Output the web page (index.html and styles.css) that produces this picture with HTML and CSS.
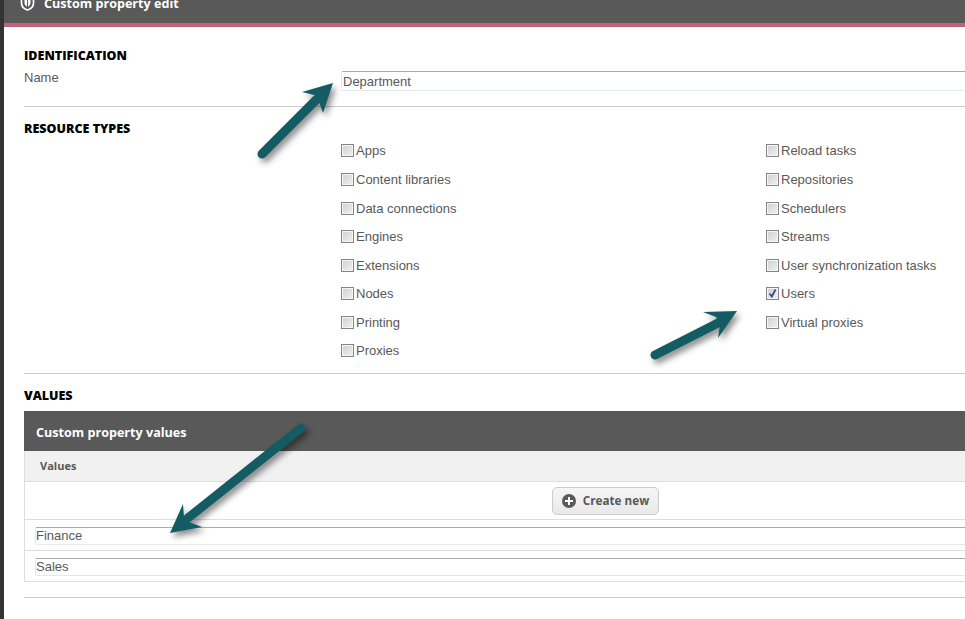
FILE: index.html
```html
<!DOCTYPE html>
<html lang="en">
<head>
<meta charset="utf-8">
<title>Custom property edit</title>
<link rel="stylesheet" href="styles.css">
</head>
<body>
<div class="strip"></div>
<main class="main">
  <header class="topbar">
    <svg class="shield" width="15" height="16" viewBox="0 0 15 16"><path d="M7.500 1 L13.500 3 V8 C13.500 11.500 10.500 14 7.500 15 C4.500 14 1.500 11.500 1.500 8 V3 Z" fill="none" stroke="#fff" stroke-width="1.700"/><path d="M4.500 5 H10.500 V8 C10.500 9.800 9 11 7.500 12 C6 11 4.500 9.800 4.500 8 Z" fill="#fff"/><path d="M7.500 4 V12" stroke="#595959" stroke-width="1"/></svg>
    <span class="topbar-title">Custom property edit</span>
  </header>

  <section class="section section-id">
    <h2 class="heading">IDENTIFICATION</h2>
    <div class="name-row">
      <label class="name-label">Name</label>
      <div class="field">Department</div>
    </div>
  </section>

  <section class="section section-types">
    <h2 class="heading">RESOURCE TYPES</h2>
    <div class="types">
      <ul class="type-list">
        <li class="type"><span class="box"></span>Apps</li>
        <li class="type"><span class="box"></span>Content libraries</li>
        <li class="type"><span class="box"></span>Data connections</li>
        <li class="type"><span class="box"></span>Engines</li>
        <li class="type"><span class="box"></span>Extensions</li>
        <li class="type"><span class="box"></span>Nodes</li>
        <li class="type"><span class="box"></span>Printing</li>
        <li class="type"><span class="box"></span>Proxies</li>
      </ul>
      <ul class="type-list">
        <li class="type"><span class="box"></span>Reload tasks</li>
        <li class="type"><span class="box"></span>Repositories</li>
        <li class="type"><span class="box"></span>Schedulers</li>
        <li class="type"><span class="box"></span>Streams</li>
        <li class="type"><span class="box"></span>User synchronization tasks</li>
        <li class="type"><span class="box"><svg class="tick" width="11" height="11" viewBox="0 0 11 11"><path d="M2.500 5.500 L4.800 8.500 L8.500 1.500" fill="none" stroke="#3d4a8a" stroke-width="1.800"/></svg></span>Users</li>
        <li class="type"><span class="box"></span>Virtual proxies</li>
      </ul>
    </div>
  </section>

  <section class="section section-values">
    <h2 class="heading">VALUES</h2>
    <div class="panel">
      <div class="panel-title">Custom property values</div>
      <div class="panel-cols">Values</div>
      <div class="panel-row panel-row-action">
        <button class="create" type="button">
          <svg width="14" height="14" viewBox="0 0 14 14"><circle cx="7" cy="7" r="7" fill="#595959"/><path d="M7 3 V11 M3 7 H11" stroke="#fff" stroke-width="2"/></svg>
          Create new
        </button>
      </div>
      <div class="panel-row"><div class="field">Finance</div></div>
      <div class="panel-row"><div class="field">Sales</div></div>
    </div>
  </section>
</main>

<svg class="arrows" width="965" height="619" viewBox="0 0 965 619">
  <g class="arrow">
    <path d="M262 154 L316 100" class="shaft"/>
    <path d="M333 83 L302 92 L314 95 L318 99 L323 113 Z" class="head"/>
  </g>
  <g class="arrow">
    <path d="M655 355 L718 323" class="shaft"/>
    <path d="M737 311 L703 312 L716 317 L720 325 L718 338 Z" class="head"/>
  </g>
  <g class="arrow">
    <path d="M301 428 L188 518" class="shaft"/>
    <path d="M170 533 L183 504 L184 517 L189 522 L202 527 Z" class="head"/>
  </g>
</svg>
</body>
</html>
```
FILE: styles.css
```css
html, body {
  margin: 0;
  height: 619px;
  overflow: hidden;
  background: #fff;
}
body {
  position: relative;
  display: flex;
  font-family: "Liberation Sans", Arial, sans-serif;
  font-size: 13px;
  color: #595959;
}
.strip {
  flex: 0 0 4px;
  background: #333;
}
.main {
  flex: 1;
  min-width: 0;
  overflow: hidden;
}
.topbar {
  height: 23px;
  border-bottom: 4px solid #c4627c;
  background: #595959;
  display: flex;
  align-items: flex-end;
  padding: 0 0 0 16px;
  overflow: hidden;
}
.shield {
  flex: none;
  margin-bottom: 12px;
}
.topbar-title {
  margin: 0 0 11px 9px;
  font-family: "Open Sans", sans-serif;
  font-weight: 700;
  font-size: 12.6px;
  line-height: 16px;
  color: #fff;
}
.section {
  margin-left: 20px;
  border-bottom: 1px solid #ccc;
}
.heading {
  margin: 0;
  font-family: "Open Sans", sans-serif;
  font-weight: 800;
  font-size: 12.5px;
  line-height: 16px;
  color: #000;
}
.section-id {
  padding: 21px 0 15px;
}
.name-row {
  margin-top: 7px;
  display: grid;
  grid-template-columns: 317px 1fr;
}
.name-label {
  line-height: 14px;
}
.field {
  box-sizing: border-box;
  height: 20px;
  line-height: 19px;
  padding-left: 1px;
  border: 1px solid #e3e9ef;
  border-top-color: #aaa;
  border-right: 0;
  border-radius: 2px 0 0 2px;
}
.section-types {
  padding: 14px 0 8px;
}
.types {
  margin-top: -1px;
  display: grid;
  grid-template-columns: 425px 1fr;
  padding-left: 317px;
}
.type-list {
  margin: 0;
  padding: 0;
  list-style: none;
}
.type {
  height: 28.5px;
  display: flex;
  align-items: center;
  gap: 2px;
}
.type:first-child {
  height: 29.5px;
}
.box {
  box-sizing: border-box;
  width: 13px;
  height: 13px;
  flex: none;
  border: 1px solid #848484;
  box-shadow: inset 0 0 0 1px #f6f6f6;
  background: linear-gradient(135deg, #cfcfcf, #f2f2f2);
  position: relative;
}
.tick {
  position: absolute;
  left: 0;
  top: 0;
}
.section-values {
  padding: 14px 0 15px;
}
.panel {
  width: 1161px;
  margin-top: 7px;
  border-left: 1px solid #ddd;
}
.panel-title {
  height: 40px;
  margin-left: -1px;
  padding-left: 12px;
  background: #595959;
  color: #fff;
  font-family: "Open Sans", sans-serif;
  font-weight: 700;
  font-size: 12.6px;
  line-height: 43px;
}
.panel-cols {
  box-sizing: border-box;
  height: 31px;
  padding-left: 15px;
  background: #f1f1f1;
  border-bottom: 1px solid #ddd;
  font-family: "Open Sans", sans-serif;
  font-weight: 700;
  font-size: 11px;
  line-height: 29px;
}
.panel-row {
  box-sizing: border-box;
  height: 31px;
  padding: 7px 0 0 10px;
  border-bottom: 1px solid #ddd;
}
.panel-row .field {
  height: 18px;
  line-height: 16px;
  padding-left: 0;
}
.panel-row-action {
  height: 38px;
  padding: 5px 0 0;
  display: flex;
  justify-content: center;
}
.create {
  box-sizing: border-box;
  width: 107px;
  height: 28px;
  display: flex;
  align-items: center;
  justify-content: center;
  gap: 7px;
  padding: 0 0 3px;
  border: 1px solid #ccc;
  border-radius: 5px;
  background: linear-gradient(#f6f6f6, #e9e9e9);
  color: #595959;
  font-family: "Open Sans", sans-serif;
  font-weight: 700;
  font-size: 11.7px;
}
.create svg {
  margin-top: 3px;
}
.arrows {
  position: absolute;
  left: 0;
  top: 0;
  pointer-events: none;
}
.arrow {
  filter: drop-shadow(3px 4px 3px rgba(0, 0, 0, 0.45));
}
.shaft {
  fill: none;
  stroke: #145c63;
  stroke-width: 9;
  stroke-linecap: round;
}
.head {
  fill: #145c63;
}
```
